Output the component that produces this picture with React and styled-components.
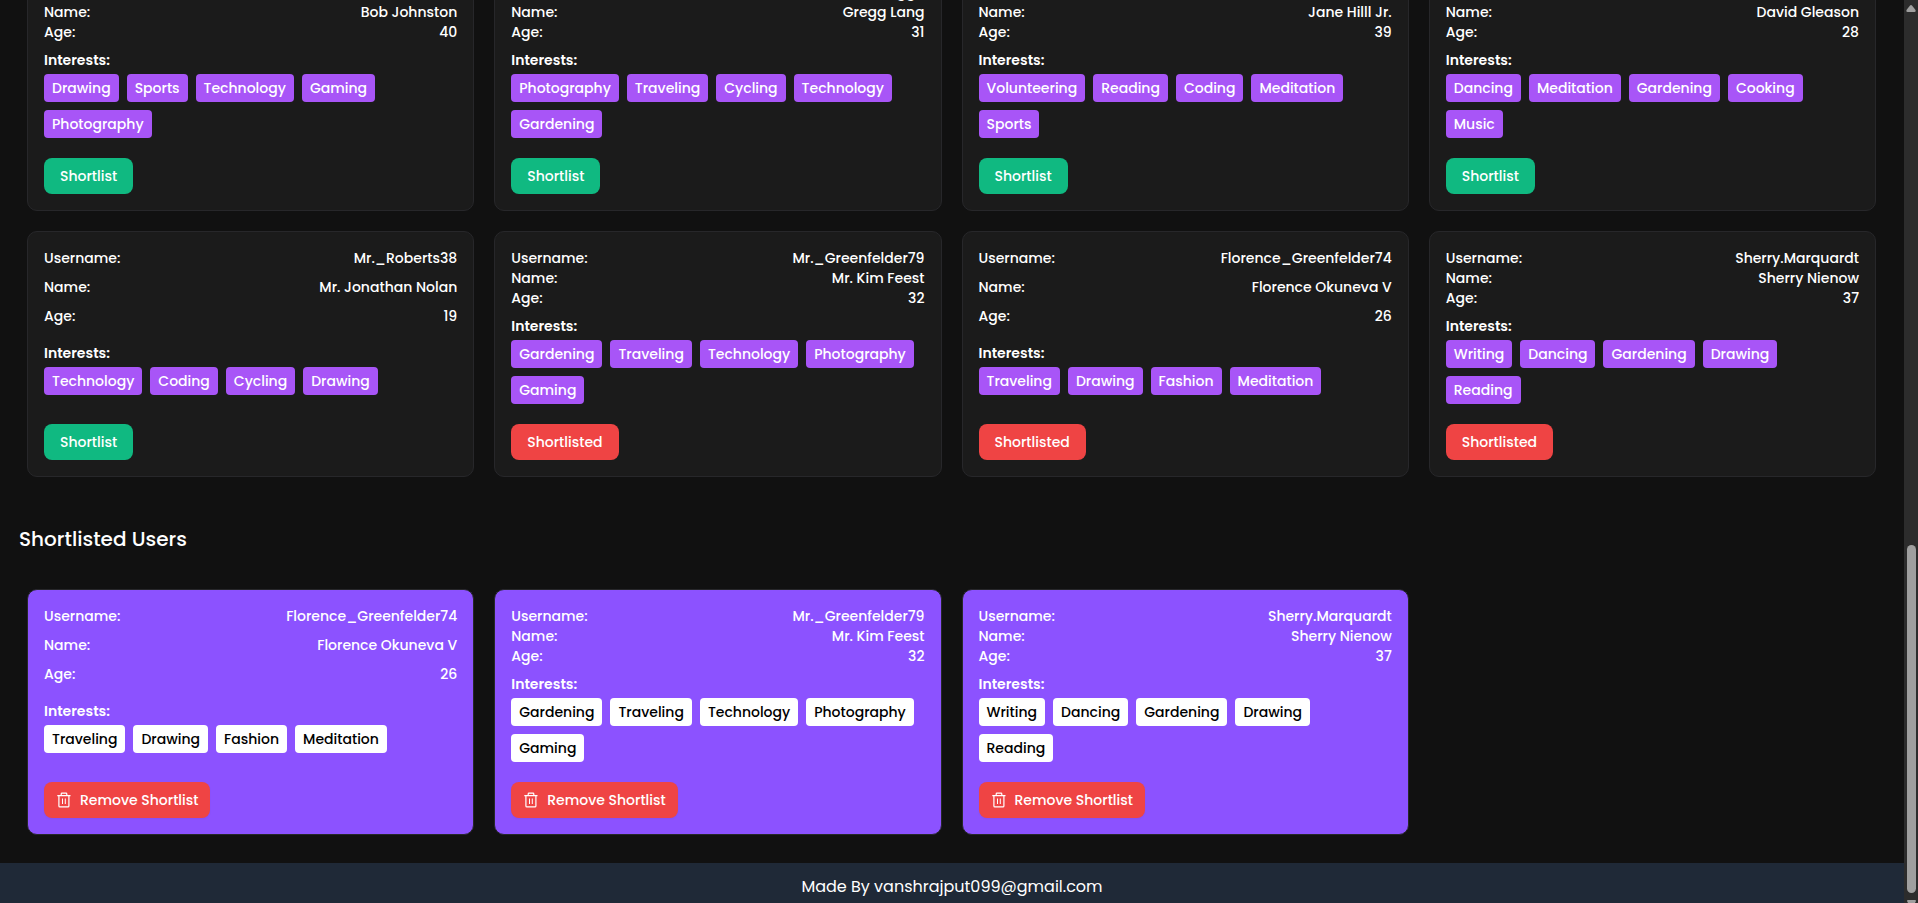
import React from "react";
import styled, { createGlobalStyle } from "styled-components";

const GlobalStyle = createGlobalStyle`
  *, *::before, *::after { box-sizing: border-box; }
  body {
    margin: 0;
    background: #111;
    color: #fff;
    font-family: Poppins, Inter, "Open Sans", sans-serif;
    font-size: 14px;
    font-weight: 500;
    line-height: 20px;
  }
`;

const Shell = styled.div`
  display: flex;
  height: 100vh;
  overflow: hidden;
`;

const Page = styled.div`
  flex: 1;
  min-width: 0;
  display: flex;
  flex-direction: column;
  justify-content: flex-end;
`;

const CardGrid = styled.main`
  display: grid;
  grid-template-columns: repeat(4, minmax(0, 1fr));
  gap: 20px;
  padding: 0 28px 0 27px;
`;

const Heading = styled.h2`
  margin: 0;
  padding: 48px 19px 36px;
  font-size: 20px;
  font-weight: 500;
  line-height: 28px;
`;

const Card = styled.article`
  display: flex;
  flex-direction: column;
  align-items: stretch;
  min-height: 246px;
  padding: 16px;
  border: 1px solid #27272a;
  border-radius: 10px;
  background: ${(p) => (p.$accent ? "#8c52ff" : "#1b1b1b")};
`;

const Details = styled.div`
  flex: 1;
  display: grid;
`;

const Row = styled.div`
  display: flex;
  justify-content: space-between;
`;

const Interests = styled.section`
  padding: 8px 0 20px;
`;

const InterestsTitle = styled.h3`
  margin: 0 0 4px;
  font-size: 14px;
  font-weight: 600;
  line-height: 20px;
`;

const Chips = styled.ul`
  display: flex;
  flex-wrap: wrap;
  gap: 8px;
  margin: 0;
  padding: 0;
  list-style: none;
`;

const Chip = styled.li`
  padding: 4px 8px;
  border-radius: 4px;
  background: ${(p) => (p.$accent ? "#fff" : "#a855f7")};
  color: ${(p) => (p.$accent ? "#000" : "#fff")};
`;

const Button = styled.button`
  align-self: flex-start;
  display: inline-flex;
  align-items: center;
  gap: 8px;
  height: 36px;
  padding: ${(p) => (p.$withIcon ? "0 12px" : "0 16px")};
  border: 0;
  border-radius: 8px;
  background: ${(p) => (p.$danger ? "#ef4444" : "#10b981")};
  color: #fff;
  font: inherit;
  box-shadow: ${(p) => (p.$withIcon ? "0 1px 2px rgba(0, 0, 0, 0.05)" : "none")};
  cursor: pointer;
`;

const Footer = styled.footer`
  margin-top: 28px;
  padding: 12px 0 4px;
  background: #1f2937;
  font-size: 16px;
  font-weight: 400;
  line-height: 24px;
  text-align: center;
`;

const ScrollRail = styled.div`
  display: flex;
  flex-direction: column;
  align-items: center;
  width: 14px;
  padding-top: 5px;
  background: #2c2c2c;
`;

const ScrollThumb = styled.div`
  width: 9px;
  height: 348px;
  margin-top: auto;
  margin-bottom: 7px;
  border-radius: 5px;
  background: #9f9f9f;
`;

const TrashIcon = () => (
  <svg width="16" height="16" viewBox="0 0 16 16" fill="none" stroke="currentColor" aria-hidden="true">
    <path d="M1.300 3.600h13.200M5.200 3.500V2q0-.8.8-.8h4q.8 0 .8.8v1.500M2.900 3.600v10.300q0 1 1 1h8q1 0 1-1V3.600" strokeWidth="1.200" />
    <path d="M6.500 6.500v5.500M9.300 6.500v5.500" strokeWidth="1" />
  </svg>
);

const ArrowUp = () => (
  <svg width="10" height="7" viewBox="0 0 10 7" aria-hidden="true">
    <path d="M4 .6Q5-.4 6 .6L9.500 5Q10 7 8.500 7H1.500Q0 7 .5 5Z" fill="#9f9f9f" />
  </svg>
);

const ArrowDown = () => (
  <svg width="9" height="3" viewBox="0 0 9 3" aria-hidden="true">
    <path d="M1 0H8Q9 0 9 1L8 3H1L0 1Q0 0 1 0Z" fill="#9f9f9f" />
  </svg>
);

const users = [
  { username: "Bob.Johnston", name: "Bob Johnston", age: 40, interests: ["Drawing", "Sports", "Technology", "Gaming", "Photography"] },
  { username: "Gregg8", name: "Gregg Lang", age: 31, interests: ["Photography", "Traveling", "Cycling", "Technology", "Gardening"] },
  { username: "Jane.Hilll", name: "Jane Hilll Jr.", age: 39, interests: ["Volunteering", "Reading", "Coding", "Meditation", "Sports"] },
  { username: "David.Gleason", name: "David Gleason", age: 28, interests: ["Dancing", "Meditation", "Gardening", "Cooking", "Music"] },
  { username: "Mr._Roberts38", name: "Mr. Jonathan Nolan", age: 19, interests: ["Technology", "Coding", "Cycling", "Drawing"] },
  { username: "Mr._Greenfelder79", name: "Mr. Kim Feest", age: 32, interests: ["Gardening", "Traveling", "Technology", "Photography", "Gaming"] },
  { username: "Florence_Greenfelder74", name: "Florence Okuneva V", age: 26, interests: ["Traveling", "Drawing", "Fashion", "Meditation"] },
  { username: "Sherry.Marquardt", name: "Sherry Nienow", age: 37, interests: ["Writing", "Dancing", "Gardening", "Drawing", "Reading"] },
];

const shortlisted = [users[6], users[5], users[7]];

function UserCard({ user, accent, children }) {
  return (
    <Card $accent={accent}>
      <Details>
        <Row><span>Username:</span><span>{user.username}</span></Row>
        <Row><span>Name:</span><span>{user.name}</span></Row>
        <Row><span>Age:</span><span>{user.age}</span></Row>
        <Interests>
          <InterestsTitle>Interests:</InterestsTitle>
          <Chips>
            {user.interests.map((label) => (
              <Chip key={label} $accent={accent}>{label}</Chip>
            ))}
          </Chips>
        </Interests>
      </Details>
      {children}
    </Card>
  );
}

export default function App() {
  return (
    <>
      <GlobalStyle />
      <Shell>
        <Page>
          <CardGrid>
            {users.map((user) => {
              const picked = shortlisted.includes(user);
              return (
                <UserCard key={user.username} user={user}>
                  <Button type="button" $danger={picked}>{picked ? "Shortlisted" : "Shortlist"}</Button>
                </UserCard>
              );
            })}
          </CardGrid>
          <Heading>Shortlisted Users</Heading>
          <CardGrid as="section">
            {shortlisted.map((user) => (
              <UserCard key={user.username} user={user} accent>
                <Button type="button" $danger $withIcon><TrashIcon />Remove Shortlist</Button>
              </UserCard>
            ))}
          </CardGrid>
          <Footer>Made By vanshrajput099@gmail.com</Footer>
        </Page>
        <ScrollRail>
          <ArrowUp />
          <ScrollThumb />
          <ArrowDown />
        </ScrollRail>
      </Shell>
    </>
  );
}
